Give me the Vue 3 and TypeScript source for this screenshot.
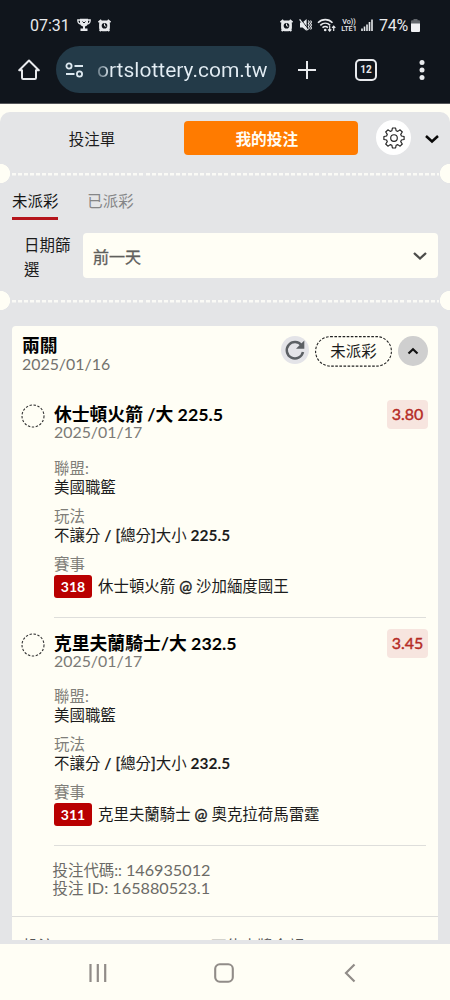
<script setup lang="ts">
interface Leg {
  title: string
  line: string
  date: string
  odds: string
  league: string
  code: string
  away: string
  home: string
}

const legs: Leg[] = [
  { title: '休士頓火箭 /大', line: '225.5', date: '2025/01/17', odds: '3.80', league: '美國職籃', code: '318', away: '休士頓火箭', home: '沙加緬度國王' },
  { title: '克里夫蘭騎士/大', line: '232.5', date: '2025/01/17', odds: '3.45', league: '美國職籃', code: '311', away: '克里夫蘭騎士', home: '奧克拉荷馬雷霆' },
]
</script>

<template>
  <div class="screen">
    <header class="chrome">
      <div class="status">
        <span class="clock">07:31</span>
        <svg class="trophy" width="14" height="14" viewBox="0 0 14 14">
          <path d="M3 0.8h8v3.7c0 2.400-1.400 4-4 4s-4-1.600-4-4z" fill="#e8eaed" />
          <path d="M3 2H.8c0 2.500.8 3.800 3 3.900M11 2h2.200c0 2.500-.8 3.800-3 3.900" fill="none" stroke="#e8eaed" stroke-width="1.300" />
          <path d="M6 8h2v2.500h2.500V13h-7v-2.500H6z" fill="#e8eaed" />
          <path d="M5.500 3.500 7 5l1.500-1.500" fill="none" stroke="#10151c" stroke-width="1" />
        </svg>
        <svg class="alarm" width="13" height="13" viewBox="0 0 13 13">
          <path d="M.5 3.300 3.300.8M12.500 3.300 9.700.8M1.700 12.200l1.500-1.700M11.300 12.200l-1.500-1.700" stroke="#e8eaed" stroke-width="1.800" />
          <rect x="1.100" y="1.400" width="10.800" height="10.800" rx="3.500" fill="#e8eaed" />
          <circle cx="6.500" cy="6.700" r="2.800" fill="#10151c" />
          <path d="M6.500 4.600v2.200l1.700.5" fill="none" stroke="#e8eaed" stroke-width="1" />
        </svg>
        <span class="grow"></span>
        <svg class="alarm2" width="13" height="13" viewBox="0 0 13 13">
          <path d="M.5 3.300 3.300.8M12.500 3.300 9.700.8M1.700 12.200l1.500-1.700M11.300 12.200l-1.500-1.700" stroke="#e8eaed" stroke-width="1.800" />
          <rect x="1.100" y="1.400" width="10.800" height="10.800" rx="3.500" fill="#e8eaed" />
          <circle cx="6.500" cy="6.700" r="2.800" fill="#10151c" />
          <path d="M6.500 4.600v2.200l1.700.5" fill="none" stroke="#e8eaed" stroke-width="1" />
        </svg>
        <svg class="mute" width="13" height="14" viewBox="0 0 13 14">
          <path d="M1 4.500h2.600L7.600 1v12L3.600 9.500H1z" fill="#e8eaed" />
          <path d="M1.600 1 9 10.800" stroke="#10151c" stroke-width="1" />
          <path d="M.6 1.400 8.700 12.200" stroke="#e8eaed" stroke-width="1.300" />
          <path d="M9.300 2.500l1 1.500-1 1.500 1 1.500-1 1.500 1 1.500-1 1.500M11.500 2.500l1 1.500-1 1.500 1 1.500-1 1.500 1 1.500-1 1.500" fill="none" stroke="#e8eaed" stroke-width="1.100" />
        </svg>
        <svg class="wifi" width="20" height="14" viewBox="0 0 20 14">
          <path d="M1 4.800c4-4.200 10.500-4.200 14.500 0M3.300 7.300c2.900-2.800 7-2.800 9.900 0M5.500 9.700c1.700-1.500 3.800-1.500 5.400 0" fill="none" stroke="#e8eaed" stroke-width="1.600" />
          <circle cx="8.200" cy="12" r="1.300" fill="#e8eaed" />
          <path d="M12.700 8v5m-1.600-1.700 1.600 1.700 1.600-1.700M16.700 13V8.200m-1.600 1.700 1.600-1.700 1.600 1.700" fill="none" stroke="#e8eaed" stroke-width="1.200" />
        </svg>
        <span class="volte"><span>Vo))</span><span>LTE1</span></span>
        <svg class="signal" width="12" height="12" viewBox="0 0 12 12">
          <path d="M1 12V9.500M3.500 12V7.500M6 12V5.500M8.500 12V3M11 12V.5" stroke="#e8eaed" stroke-width="1.600" />
        </svg>
        <span class="percent">74%</span>
        <svg class="battery" width="9" height="13" viewBox="0 0 9 13">
          <path d="M2.500 0h4v1.200H8q1 0 1 1V5H0V2.200q0-1 1-1h1.500z" fill="#63676c" />
          <path d="M0 4.500h9V12q0 1-1 1H1q-1 0-1-1z" fill="#f0f1f3" />
        </svg>
      </div>
      <div class="toolbar">
        <svg class="home" width="22" height="22" viewBox="0 0 22 22">
          <path d="M1.200 11.200 11 1.500l9.800 9.700H18V18.800q0 1.200-1.200 1.200H5.200Q4 20 4 18.800V11.200z" fill="none" stroke="#e8eaed" stroke-width="2" stroke-linejoin="round" />
        </svg>
        <div class="address">
          <svg width="19" height="16" viewBox="0 0 19 16">
            <g fill="none" stroke="#dce8f0" stroke-width="1.800">
              <circle cx="4" cy="4" r="2.600" /><path d="M9.500 4H18M1 12h8.500" /><circle cx="14.500" cy="12" r="2.600" />
            </g>
          </svg>
          <span class="url">ortslottery.com.tw</span>
        </div>
        <svg class="plus" width="20" height="20" viewBox="0 0 20 20"><path d="M10 1v18M1 10h18" stroke="#e8eaed" stroke-width="2" /></svg>
        <span class="tabs">12</span>
        <svg class="dots" width="6" height="20" viewBox="0 0 6 20"><g fill="#e8eaed"><circle cx="3" cy="2.600" r="2.500" /><circle cx="3" cy="10" r="2.500" /><circle cx="3" cy="17.400" r="2.500" /></g></svg>
      </div>
    </header>

    <main class="panel">
      <div class="switcher">
        <span class="slip">投注單</span>
        <button class="mine">我的投注</button>
        <span class="gear">
          <svg width="22" height="22" viewBox="0 0 22 22" fill="none" stroke="#222" stroke-width="1.150">
            <path stroke-linejoin="round" d="M9.400 1h3.200l.5 2.700 1.700.7 2.300-1.600 2.200 2.200-1.600 2.300.7 1.700 2.700.5v3l-2.700.5-.7 1.700 1.600 2.300-2.200 2.200-2.300-1.600-1.700.7-.5 2.700H9.400l-.5-2.700-1.700-.7-2.300 1.600L2.700 17l1.600-2.300-.7-1.700-2.700-.5v-3L3.600 9l.7-1.700L2.700 5l2.200-2.200 2.300 1.600 1.700-.7z" />
            <circle cx="11" cy="11" r="3.300" />
          </svg>
        </span>
        <svg class="fold" width="16" height="10" viewBox="0 0 16 10"><path d="m2 2 6 5.500L14 2" fill="none" stroke="#080808" stroke-width="2.500" /></svg>
      </div>

      <div class="perforation"></div>

      <nav class="subtabs">
        <span class="active">未派彩</span>
        <span>已派彩</span>
      </nav>
      <div class="filter">
        <label>日期篩選</label>
        <div class="select">
          <span>前一天</span>
          <svg width="16" height="10" viewBox="0 0 16 10"><path d="m2 2 6 5.500L14 2" fill="none" stroke="#4c4c4a" stroke-width="2.300" /></svg>
        </div>
      </div>

      <div class="perforation"></div>

      <section class="card">
        <div class="card-head">
          <div class="names">
            <strong>兩關</strong>
            <span>2025/01/16</span>
          </div>
          <span class="refresh">
            <svg width="22" height="22" viewBox="0 0 22 22">
              <path d="M17.600 6.400A8.200 8.200 0 1 0 19 13" fill="none" stroke="#5c6064" stroke-width="2.500" />
              <path d="M20.300 1.500v8.300H12z" fill="#5c6064" />
            </svg>
          </span>
          <span class="pill">
            <svg width="77" height="31" viewBox="0 0 77 31"><rect x=".6" y=".6" width="75.800" height="29.500" rx="14.700" fill="none" stroke="#222" stroke-width="1.100" stroke-dasharray="2.600 1.500" /></svg>
            <span>未派彩</span>
          </span>
          <span class="collapse">
            <svg width="12" height="8" viewBox="0 0 12 8"><path d="m1.500 6.500 4.500-4.300 4.500 4.300" fill="none" stroke="#111" stroke-width="2.200" /></svg>
          </span>
        </div>

        <article v-for="leg in legs" :key="leg.code" class="leg">
          <svg class="ring" width="24" height="24" viewBox="0 0 24 24"><circle cx="12" cy="12" r="11" fill="none" stroke="#333" stroke-width="1.100" stroke-dasharray="2.400 1.600" /></svg>
          <div class="leg-body">
            <div class="leg-top">
              <h3>{{ leg.title }} {{ leg.line }}</h3>
              <span class="odds">{{ leg.odds }}</span>
            </div>
            <div class="leg-date">{{ leg.date }}</div>
            <dl>
              <dt>聯盟:</dt>
              <dd>{{ leg.league }}</dd>
              <dt>玩法</dt>
              <dd>不讓分 <b>/</b> <i>[</i>總分<i>]</i>大小 <b>{{ leg.line }}</b></dd>
              <dt>賽事</dt>
              <dd class="match"><span class="code">{{ leg.code }}</span><span>{{ leg.away }} <i>@</i> {{ leg.home }}</span></dd>
            </dl>
          </div>
        </article>

        <div class="ids">
          <div>投注代碼:: <span>146935012</span></div>
          <div>投注 <span>ID: 165880523.1</span></div>
        </div>
        <div class="totals">
          <span>投注</span>
          <span>可能中獎金額</span>
        </div>
      </section>
    </main>

    <footer class="system">
      <svg width="20" height="20" viewBox="0 0 20 20"><path d="M2.500 1v18M9.800 1v18M17.200 1v18" stroke="#918c88" stroke-width="2.200" /></svg>
      <svg width="20" height="20" viewBox="0 0 20 20"><rect x="1.200" y="1.300" width="17.600" height="17.400" rx="4.500" fill="none" stroke="#918c88" stroke-width="2.100" /></svg>
      <svg width="12" height="20" viewBox="0 0 12 20"><path d="M10.500 1.500 2 10l8.500 8.500" fill="none" stroke="#918c88" stroke-width="2.200" /></svg>
    </footer>
  </div>
</template>

<style>
body {
  margin: 0;
}
</style>

<style scoped>
.screen {
  width: 450px;
  height: 1000px;
  overflow: hidden;
  display: flex;
  flex-direction: column;
  background: #fffef5;
  color: #1c1c1c;
  font-family: Lato, "Noto Sans CJK TC", sans-serif;
  font-size: 15.450px;
}
.screen svg {
  display: block;
  flex: none;
}
.chrome {
  height: 104px;
  flex: none;
  box-sizing: border-box;
  border-bottom: 1px solid #55565a;
  background: #10151c;
  color: #e8eaed;
  font-family: Roboto, sans-serif;
}
.status {
  display: flex;
  align-items: center;
  height: 20px;
  padding: 15px 30px 0;
  font-size: 16px;
}
.clock {
  width: 40px;
}
.percent {
  width: 31px;
  letter-spacing: -0.200px;
}
.trophy {
  margin-left: 7px;
}
.alarm {
  margin-left: 7px;
}
.grow {
  flex: 1;
}
.mute {
  margin-left: 6px;
}
.wifi {
  margin-left: 5px;
}
.volte {
  display: flex;
  flex-direction: column;
  align-items: center;
  width: 18px;
  margin-left: 3px;
  font-size: 7.200px;
  font-weight: 500;
  line-height: 7px;
}
.signal {
  margin: 0 6px 0 3px;
}
.battery {
  margin-left: 1px;
}
.toolbar {
  display: flex;
  align-items: center;
  height: 47px;
  margin-top: 11px;
  padding-left: 18px;
}
.address {
  display: flex;
  align-items: center;
  width: 220px;
  height: 47px;
  box-sizing: border-box;
  margin-left: 16px;
  padding-left: 9px;
  border-radius: 24px;
  background: #233a48;
}
.url {
  margin-left: 13px;
  font-size: 21px;
  white-space: nowrap;
  background: linear-gradient(90deg, #667985 0, #e3edf4 14px);
  background-clip: text;
  color: transparent;
}
.plus {
  margin-left: 21px;
}
.tabs {
  width: 22px;
  height: 22px;
  box-sizing: border-box;
  margin-left: 38px;
  border: 2px solid #e8eaed;
  border-radius: 5px;
  font-size: 10px;
  font-weight: 700;
  line-height: 18px;
  text-align: center;
}
.dots {
  margin-left: 42px;
}
.panel {
  height: 832px;
  flex: none;
  box-sizing: border-box;
  margin-top: 8px;
  border-radius: 10px 10px 0 0;
  overflow: hidden;
  background: #e4e5e7;
}
.switcher {
  display: flex;
  align-items: center;
  height: 52px;
}
.slip {
  width: 184px;
  text-align: center;
}
.mine {
  width: 173.500px;
  height: 34px;
  padding: 0 8px 0 0;
  border: 0;
  border-radius: 4px;
  background: #ff7b00;
  color: #fffdf5;
  font: 700 15.700px Lato, "Noto Sans CJK TC", sans-serif;
}
.mine,
.gear {
  flex: none;
}
.gear {
  display: grid;
  place-items: center;
  width: 35px;
  height: 35px;
  margin: -1px 0 0 18.500px;
  border-radius: 50%;
  background: #fff;
}
.fold {
  margin: 2px 0 0 13px;
}
.perforation {
  height: 19px;
  background:
    radial-gradient(circle at 0.5px 9.500px, #fffef5 9.200px, transparent 9.900px),
    radial-gradient(circle at 449.500px 9.500px, #fffef5 9.200px, transparent 9.900px),
    repeating-linear-gradient(90deg, #fafaf6 0 4px, transparent 4px 6.070px) 12px 9px / 427px 2.500px no-repeat;
}
.subtabs {
  display: flex;
  gap: 29px;
  height: 37px;
  padding-left: 12px;
  color: #858687;
}
.subtabs span {
  height: 34px;
  line-height: 37px;
}
.subtabs .active {
  border-bottom: 3px solid #b5151c;
  color: #151515;
}
.filter {
  display: flex;
  height: 71px;
  padding: 13px 12px 0 24px;
  box-sizing: border-box;
}
.filter label {
  width: 47px;
  margin-right: 12px;
  line-height: 24px;
}
.select {
  display: flex;
  flex: 1;
  align-items: center;
  justify-content: space-between;
  height: 45px;
  padding: 0 10px;
  border-radius: 4px;
  background: #fffef5;
  color: #5f5f5c;
}
.select span {
  font-size: 16px;
  -webkit-text-stroke: 0.350px #5f5f5c;
}
.card {
  width: 426px;
  height: 614px;
  margin: 16px 0 0 12px;
  border-radius: 4px 4px 0 0;
  overflow: hidden;
  background: #fffef5;
}
.card-head {
  display: flex;
  align-items: flex-start;
  height: 63px;
  box-sizing: border-box;
  padding: 10px 10px 0;
}
.names {
  display: flex;
  flex: 1;
  flex-direction: column;
}
.names strong {
  height: 19px;
  color: #000;
  font-size: 17.800px;
  line-height: 19px;
}
.names span {
  color: #73726e;
  font-size: 15.900px;
  line-height: 18px;
}
.refresh {
  display: grid;
  place-items: center;
  width: 28px;
  height: 28px;
  border-radius: 50%;
  background: #e4e4e8;
}
.pill {
  display: grid;
  width: 77px;
  height: 31px;
  margin: 0 6px;
}
.pill > * {
  grid-area: 1 / 1;
}
.pill span {
  place-self: center;
  padding-bottom: 3px;
}
.collapse {
  display: grid;
  place-items: center;
  width: 30px;
  height: 30px;
  border-radius: 50%;
  background: #cfcfcf;
}
.leg {
  display: flex;
  height: 228.500px;
  padding: 0 10px 0 9px;
}
.leg .ring {
  margin-top: 15px;
}
.leg-body {
  flex: 1;
  margin-left: 9px;
  padding-top: 15px;
  background: linear-gradient(#dededb, #dededb) 0 100% / 372px 1px no-repeat;
}
.leg-top {
  display: flex;
  justify-content: space-between;
  height: 19px;
}
h3 {
  margin: 0;
  color: #000;
  font-size: 17.800px;
  font-weight: 700;
  line-height: 20px;
  white-space: nowrap;
}
.odds {
  width: 41px;
  height: 29px;
  margin-top: -4px;
  border-radius: 4px;
  background: #f7e5df;
  color: #b52b25;
  font-size: 16px;
  line-height: 28px;
  text-align: center;
  -webkit-text-stroke: 0.400px #b52b25;
}
.leg-date {
  height: 20px;
  color: #7b7a76;
  font-size: 15.900px;
  line-height: 18px;
}
dl {
  margin: 15.500px 0 0;
}
dt {
  height: 19px;
  color: #7f7e79;
  line-height: 19px;
}
dd {
  height: 19px;
  margin: 0 0 10px;
  line-height: 19px;
  white-space: nowrap;
}
i {
  font-style: normal;
  -webkit-text-stroke: 0.400px #1c1c1c;
}
.match {
  display: flex;
  align-items: center;
  height: 25px;
}
.code {
  width: 38px;
  height: 23px;
  margin-right: 6px;
  border-radius: 3px;
  background: #b90000;
  color: #fff;
  font-size: 14px;
  font-weight: 700;
  line-height: 23px;
  text-align: center;
}
.ids {
  height: 71px;
  box-sizing: border-box;
  padding: 15px 0 0 40.500px;
  border-bottom: 1px solid #dededb;
  color: #6c6b67;
  line-height: 18px;
}
.ids div {
  height: 18px;
}
.ids span {
  font-size: 16.200px;
}
.totals {
  display: flex;
  padding: 20px 0 0 11px;
  color: #555;
  line-height: 19px;
}
.totals span:first-child {
  width: 188px;
}
.system {
  display: flex;
  align-items: center;
  gap: 106px;
  flex: 1;
  padding: 2px 0 0 88px;
}
.system svg:last-child {
  margin-left: 4px;
}
</style>
